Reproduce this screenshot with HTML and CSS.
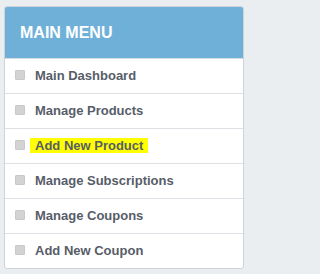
FILE: index.html
```html
<!DOCTYPE html>
<html>
<head>
<meta charset="utf-8">
<link rel="stylesheet" href="styles.css">
</head>
<body>
<div class="card">
  <div class="card-header">MAIN MENU</div>
  <ul class="menu">
    <li class="menu-item"><span class="box"></span><span class="label">Main Dashboard</span></li>
    <li class="menu-item"><span class="box"></span><span class="label">Manage Products</span></li>
    <li class="menu-item"><span class="box"></span><span class="label highlight">Add New Product</span></li>
    <li class="menu-item"><span class="box"></span><span class="label">Manage Subscriptions</span></li>
    <li class="menu-item"><span class="box"></span><span class="label">Manage Coupons</span></li>
    <li class="menu-item"><span class="box"></span><span class="label">Add New Coupon</span></li>
  </ul>
</div>
</body>
</html>
```

FILE: styles.css
```css
html, body {
  margin: 0;
  padding: 0;
  background: #ebeef0;
  font-family: "Liberation Sans", Arial, sans-serif;
}
body {
  padding: 6px 6px 0 4px;
}
.card {
  width: 238px;
  background: #ffffff;
  border: 1px solid #cdd3db;
  border-radius: 3px;
  overflow: hidden;
}
.card-header {
  height: 52px;
  background: #6fb0d8;
  color: #ffffff;
  font-weight: bold;
  font-size: 16px;
  display: flex;
  align-items: center;
  padding-left: 15px;
  padding-top: 1px;
  box-sizing: border-box;
  border-bottom: 1px solid #d6dbe1;
}
.menu {
  list-style: none;
  margin: 0;
  padding: 0;
}
.menu-item {
  height: 34px;
  box-sizing: border-box;
  display: flex;
  align-items: center;
  padding-left: 10px;
  padding-bottom: 2px;
  border-bottom: 1px solid #dde1e6;
  height: 35px;
}
.menu-item:last-child {
  border-bottom: none;
  height: 34px;
}
.box {
  width: 8px;
  height: 8px;
  background: #d3d3d3;
  border: 1px solid #c9c9c9;
  border-radius: 1px;
  margin-right: 10px;
  flex: none;
}
.label {
  font-size: 13px;
  font-weight: bold;
  color: #575d69;
  line-height: 15px;
}
.highlight {
  background: #ffff00;
  padding: 0 5px;
  margin-left: -5px;
}
```
